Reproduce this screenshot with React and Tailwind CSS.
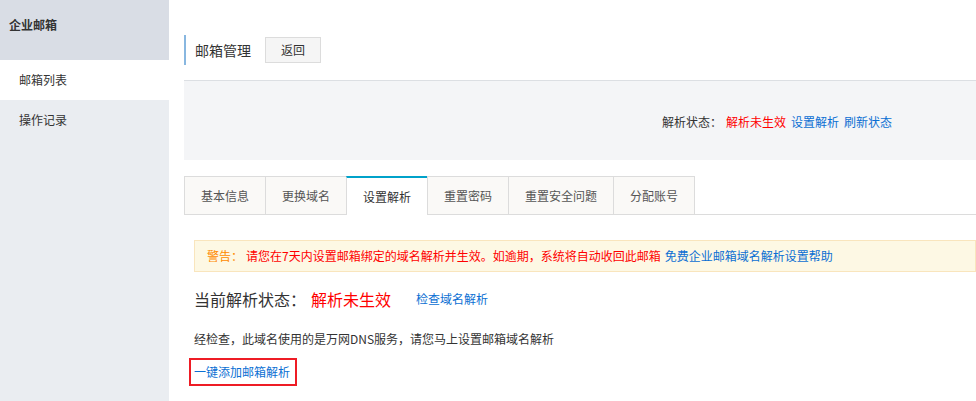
import React from 'react';

const tabs = ['基本信息', '更换域名', '设置解析', '重置密码', '重置安全问题', '分配账号'];

const App = () => {
  const active = 2;
  return (
    <div
      className="flex h-[401px] w-[976px] overflow-hidden bg-white text-[12px] text-[#333]"
      style={{ fontFamily: '"Microsoft YaHei", "Noto Sans CJK SC", sans-serif' }}
    >
      {/* sidebar */}
      <div className="w-[169px] shrink-0 bg-[#eaedf1]">
        <div className="h-[60px] bg-[#d9dde5] pl-[9px] pb-[10px] flex items-center text-[12px] font-bold text-[#333]">
          企业邮箱
        </div>
        <div className="h-[40px] bg-white pl-[19px] flex items-center">邮箱列表</div>
        <div className="h-[40px] pl-[19px] flex items-center">操作记录</div>
      </div>

      {/* main */}
      <div className="flex-1 pl-[15px] min-w-0">
        <div className="mt-[35px] h-[30px] flex items-center border-l-2 border-[#88b7e0] pl-[9px]">
          <span className="text-[14px] text-[#333]">邮箱管理</span>
          <button className="ml-[14px] h-[26px] w-[56px] border border-[#dcdcdc] bg-[#f5f5f5] text-[12px] text-[#333]">
            返回
          </button>
        </div>

        <div className="mt-[15px] h-[80px] border-t border-[#dcdfe3] bg-[#f4f5f7] flex items-center pl-[478px] pt-[2px]">
          <span>解析状态：</span>
          <span className="ml-[4px] text-[#ff0000]">解析未生效</span>
          <span className="ml-[5px] text-[#0b6fd3]">设置解析</span>
          <span className="ml-[5px] text-[#0b6fd3]">刷新状态</span>
        </div>

        <div className="mt-[16px] flex border-b border-[#dcdcdc]">
          {tabs.map((t, i) => (
            <div
              key={t}
              className={`h-[39px] -mb-px px-4 flex items-center border-l border-[#dcdcdc] ${
                i === tabs.length - 1 ? 'border-r' : ''
              } ${
                i === active
                  ? 'bg-white border-t-2 border-t-[#00a2ca] text-[#333]'
                  : 'bg-[#faf9f7] border-t border-b text-[#555]'
              }`}
            >
              {t}
            </div>
          ))}
        </div>

        <div className="ml-[10px] mt-[25px] h-[32px] flex items-center border border-[#f9e5bd] bg-[#fdf8e4] pl-[12px] whitespace-nowrap">
          <span className="text-[#ff8a00]">警告：</span>
          <span className="ml-[3px] text-[#ff0000]">
            请您在7天内设置邮箱绑定的域名解析并生效。如逾期，系统将自动收回此邮箱
          </span>
          <span className="ml-[4px] text-[#0b6fd3]">免费企业邮箱域名解析设置帮助</span>
        </div>

        <div className="ml-[10px] mt-[16px] h-[22px] flex items-center">
          <span className="text-[16px] text-[#333]">当前解析状态：</span>
          <span className="ml-[5px] text-[16px] text-[#ff0000]">解析未生效</span>
          <span className="ml-[25px] text-[#0b6fd3]">检查域名解析</span>
        </div>

        <div className="ml-[10px] mt-[20px] h-[18px] flex items-center">
          经检查，此域名使用的是万网DNS服务，请您马上设置邮箱域名解析
        </div>

        <div className="ml-[5px] mt-[10px] h-[28px] w-[108px] border-2 border-[#ee1c25] flex items-center pl-[3px] text-[#0b6fd3]">
          一键添加邮箱解析
        </div>
      </div>
    </div>
  );
};

export default App;
